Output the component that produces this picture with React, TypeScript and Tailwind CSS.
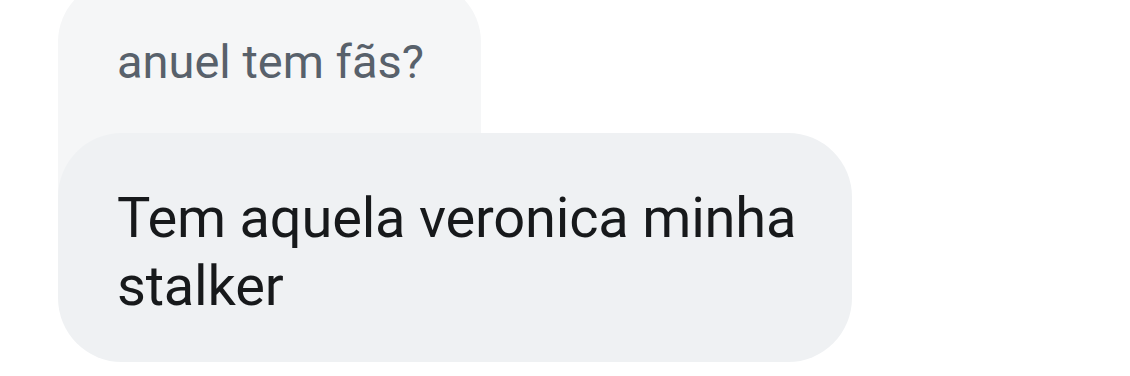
const App = () => {
    return (
        <div className="w-[1130px] h-[376px] bg-white overflow-hidden pl-[58px]" style={{ fontFamily: "Roboto, 'Noto Sans', sans-serif" }}>
            <div className="-mt-[20px] w-[423px] h-[220px] rounded-t-[62px] bg-[#f5f6f7] pl-[59px] pt-[56px]">
                <p className="text-[47px] leading-[52px] text-[#58616b]">anuel tem fãs?</p>
            </div>
            <div className="relative -mt-[67px] w-[794px] h-[229px] rounded-[64px] bg-[#eff1f3] pl-[59px] pt-[51px]">
                <p className="text-[56px] leading-[68px] text-[#17191b] tracking-[-0.2px]">
                    Tem aquela veronica minha
                    <br />
                    stalker
                </p>
            </div>
        </div>
    )
}

export default App
